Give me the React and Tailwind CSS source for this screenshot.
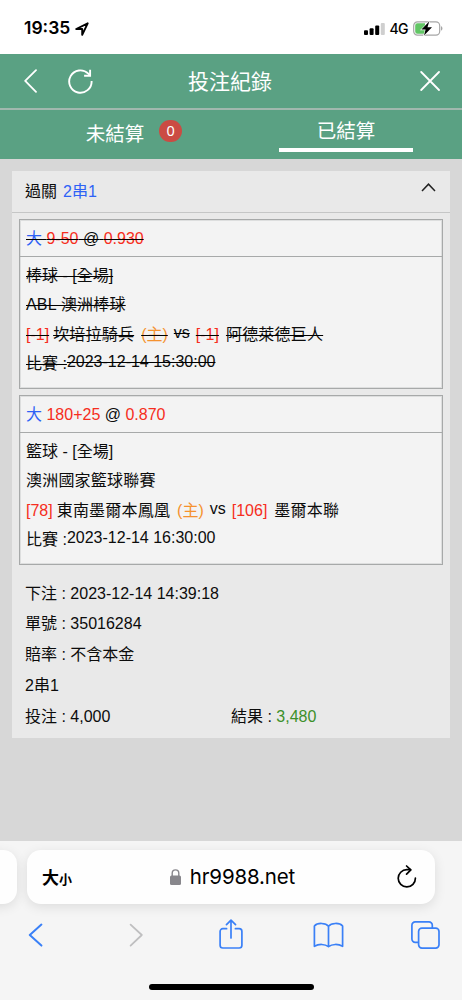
const BETS = [
  {
    pick: '9-50',
    odds: '0.930',
    sport: '棒球',
    league: 'ABL 澳洲棒球',
    home: '坎培拉騎兵',
    homeScore: '[-1]',
    away: '阿德萊德巨人',
    awayScore: '[-1]',
    date: '2023-12-14 15:30:00',
    voided: true,
  },
  {
    pick: '180+25',
    odds: '0.870',
    sport: '籃球',
    league: '澳洲國家籃球聯賽',
    home: '東南墨爾本鳳凰',
    homeScore: '[78]',
    away: '墨爾本聯',
    awayScore: '[106]',
    date: '2023-12-14 16:30:00',
    voided: false,
  },
]

const SUMMARY = [
  ['下注', '2023-12-14 14:39:18'],
  ['單號', '35016284'],
  ['賠率', '不含本金'],
]

function StatusBar() {
  return (
    <div className="flex h-[54px] items-center bg-white pl-6 pr-[19px] pt-[3px] font-['Inter',sans-serif] text-black">
      <span className="text-[17.5px] font-semibold">19:35</span>
      <svg className="ml-[5px] h-[14px] w-[14px]" viewBox="0 0 14 14" fill="none" stroke="black" strokeWidth="1.9" strokeLinejoin="round">
        <path d="M1.2 7 12.7 1.3 7.2 12.8V7Z" />
      </svg>
      <svg className="ml-auto h-[12px] w-[21px]" viewBox="0 0 21 12">
        <rect x="0" y="7.3" width="4" height="4.7" rx="1" />
        <rect x="5.6" y="5.2" width="4" height="6.8" rx="1" />
        <rect x="11.2" y="2.6" width="4" height="9.4" rx="1" />
        <rect x="16.8" y="0" width="4" height="12" rx="1" fill="#cfcfcf" />
      </svg>
      <span className="ml-[5px] text-[14px] font-medium tracking-[-0.6px]">4G</span>
      <svg className="ml-[5px] h-[15px] w-[30px]" viewBox="0 0 30 15">
        <rect x="0.7" y="0.9" width="26" height="13.2" rx="3.8" fill="white" stroke="#a6a6a6" strokeWidth="1.2" />
        <path d="M28 5.3c1.9.6 1.9 3.8 0 4.4z" fill="#a6a6a6" />
        <path d="M4.5 2.3H12v10.4H4.5a2.3 2.3 0 0 1-2.3-2.3V4.6a2.3 2.3 0 0 1 2.3-2.3Z" fill="#62c665" />
        <path d="M16.2.6 8.4 8.6h4.2L11 14.4l8-8.1h-4.5Z" stroke="white" strokeWidth="1.2" paintOrder="stroke" />
      </svg>
    </div>
  )
}

function TitleBar() {
  return (
    <header className="grid h-14 grid-cols-[1fr_auto_1fr] items-center border-b-2 border-[#a1b8ae] bg-[#5aa183] text-white">
      <div className="flex items-center pl-6">
        <svg className="h-6 w-[13px]" viewBox="0 0 13 24" fill="none" stroke="white" strokeWidth="1.8" strokeLinecap="round" strokeLinejoin="round">
          <path d="M12 1.2 1.2 11.9 12 22.8" />
        </svg>
        <svg className="ml-[31px] h-[25px] w-[25px]" viewBox="0 0 25 25" fill="none" stroke="white" strokeWidth="1.9">
          <path d="M23.6 12A11.2 11.2 0 1 1 20.3 4.6L22 6.5" />
          <path d="M22.1.8v5.9h-6" />
        </svg>
      </div>
      <h1 className="pr-0.5 pt-px text-[21px] leading-none">投注紀錄</h1>
      <svg className="mr-[22px] h-5 w-5 justify-self-end" viewBox="0 0 20 20" fill="none" stroke="white" strokeWidth="1.8" strokeLinecap="round">
        <path d="m1.2 1 17.8 18M19 1 1.2 19" />
      </svg>
    </header>
  )
}

function Tabs() {
  return (
    <nav className="grid h-[49px] grid-cols-2 bg-[#5aa183] text-[19.5px] text-white">
      <div className="flex items-start justify-center pl-[37px] pt-2">
        <span className="pt-[5px] leading-[22px]">未結算</span>
        <span className="ml-[15px] mt-[2px] flex h-[22px] w-[23px] items-center justify-center rounded-full bg-[#cb4b43] font-['Noto_Sans',sans-serif] text-[14.5px]">
          0
        </span>
      </div>
      <div className="flex flex-col items-center pr-px pt-[10px]">
        <span className="leading-[22px]">已結算</span>
        <span className="mt-[6px] h-1 w-[134px] bg-white" />
      </div>
    </nav>
  )
}

function BetCard({ bet }) {
  return (
    <section className={`h-[170px] border border-[#a7a9a9] bg-[#f3f3f3] ring-1 ring-inset ring-[#dddede] ${bet.voided ? 'line-through decoration-black decoration-[1.4px]' : ''}`}>
      <div className="h-[37px] border-b border-[#a7a9a9] pl-1.5 pt-px leading-9">
        <span className="text-[#2e62f6]">大</span> <span className="text-[#f62d20]">{bet.pick}</span> @{' '}
        <span className="text-[#f62d20]">{bet.odds}</span>
      </div>
      <div className="flex flex-col pl-1.5 pt-1 leading-[29.4px]">
        <p>{bet.sport} - [全場]</p>
        <p className="tracking-[0.2px]">{bet.league}</p>
        <p className="flex">
          <span className="text-[#f62d20]">{bet.homeScore}</span>
          <span className="ml-1 tracking-[0.2px]">{bet.home}</span>
          <span className="ml-[7px] text-[#f5922f]">(主)</span>
          <span className="-mt-0.5 ml-1.5">vs</span>
          <span className="ml-1.5 text-[#f62d20]">{bet.awayScore}</span>
          <span className="ml-[7px] tracking-[0.2px]">{bet.away}</span>
        </p>
        <p className="flex">
          <span>比賽 :</span>
          <span className="-mt-0.5">{bet.date}</span>
        </p>
      </div>
    </section>
  )
}

function BetSlip() {
  return (
    <article className="h-[567px] bg-[#e9e9e9] text-base text-[#0c0c0c]">
      <div className="flex h-[42px] items-center border-b border-[#c5c6c6] pl-[13px] pr-[14px]">
        <span>過關</span>
        <span className="ml-1.5 text-[#2e62f6]">2串1</span>
        <svg className="mb-2 ml-auto h-[9px] w-[15px]" viewBox="0 0 15 9" fill="none" stroke="#222" strokeWidth="1.5">
          <path d="M1 8 7.5 1.2 14 8" />
        </svg>
      </div>
      <div className="flex flex-col gap-1.5 px-[7px] pt-1.5">
        {BETS.map((bet) => (
          <BetCard key={bet.league} bet={bet} />
        ))}
      </div>
      <div className="pl-[13px] pt-[13.5px] leading-[30.8px]">
        {SUMMARY.map(([label, value]) => (
          <p key={label}>
            {label} : {value}
          </p>
        ))}
        <p>2串1</p>
        <div className="grid grid-cols-[206px_1fr]">
          <p>投注 : 4,000</p>
          <p>
            結果 : <span className="text-[#3c9029]">3,480</span>
          </p>
        </div>
      </div>
    </article>
  )
}

function BrowserBar() {
  return (
    <footer className="h-[159px] overflow-hidden bg-[#f5f5f5] pt-[9px]">
      <div className="flex gap-[10px]">
        <div className="-ml-5 h-[54px] w-[37px] shrink-0 rounded-[14px] bg-[#fefefe] shadow-[0_3px_12px_rgba(0,0,0,0.1)]" />
        <div className="grid h-[54px] w-[408px] shrink-0 grid-cols-[1fr_auto_1fr] items-center rounded-[14px] bg-[#fefefe] pl-[15px] pr-[18px] shadow-[0_3px_12px_rgba(0,0,0,0.1)]">
          <div className="flex items-baseline pt-0.5 font-['Noto_Sans_CJK_TC',sans-serif] font-bold text-black">
            <span className="text-[17px] leading-6">大</span>
            <span className="text-[13px] leading-6">小</span>
          </div>
          <div className="flex items-center pl-1.5">
            <svg className="h-4 w-[11px]" viewBox="0 0 11 16" fill="#88878c">
              <rect x="0" y="6.6" width="11" height="9.4" rx="1.5" />
              <path d="M2.2 7V4.2a3.3 3.3 0 0 1 6.6 0V7" fill="none" stroke="#88878c" strokeWidth="1.4" />
            </svg>
            <span className="ml-[9px] font-['Inter',sans-serif] text-[20.5px] tracking-[-0.15px] text-black">hr9988.net</span>
          </div>
          <svg className="h-[23px] w-5 -translate-y-px justify-self-end" viewBox="0 0 20 23" fill="none" stroke="black" strokeWidth="1.7" strokeLinecap="round" strokeLinejoin="round">
            <path d="M18.4 13.2a8.6 8.6 0 1 1-8.6-8.5h3.6" />
            <path d="m9.6 1 4.2 3.9-4.2 4.3" />
          </svg>
        </div>
      </div>
      <div className="mt-[15px] flex h-8 items-center pl-7 pr-[22px]">
        <svg className="h-6 w-[15px]" viewBox="0 0 15 24" fill="none" stroke="#3a80f7" strokeWidth="2" strokeLinecap="round" strokeLinejoin="round">
          <path d="M13.4 1.6 1.8 12l11.6 10.6" />
        </svg>
        <svg className="ml-[86px] h-6 w-[15px]" viewBox="0 0 15 24" fill="none" stroke="#bfbfc0" strokeWidth="1.8" strokeLinecap="round" strokeLinejoin="round">
          <path d="M1.6 1.6 12.8 12 1.6 22.6" />
        </svg>
        <svg className="ml-[75px] h-8 w-6" viewBox="0 0 24 32" fill="none" stroke="#3a80f7" strokeWidth="1.7" strokeLinecap="round" strokeLinejoin="round">
          <path d="M7.6 9.7H3.8a2.7 2.7 0 0 0-2.7 2.7v13.9a2.7 2.7 0 0 0 2.7 2.7h16.4a2.7 2.7 0 0 0 2.7-2.7V12.4a2.7 2.7 0 0 0-2.7-2.7h-3.8" />
          <path d="M12 19V1.5M7.5 5.7 12 1.2l4.5 4.5" />
        </svg>
        <svg className="ml-[70px] h-[26px] w-[31px]" viewBox="0 0 31 26" fill="none" stroke="#3a80f7" strokeWidth="1.7" strokeLinejoin="round">
          <path d="M15.5 4.2C12.8.8 4.5.4 1.4 4v20.3c4.3-2.5 10.5-2.5 14.1.4 3.6-2.9 9.8-2.9 14.1-.4V4C26.5.4 18.2.8 15.5 4.2ZM15.5 4.2v20.5" />
        </svg>
        <svg className="ml-auto h-7 w-[29px]" viewBox="0 0 29 28" fill="none" stroke="#3a80f7" strokeWidth="1.7">
          <path d="M7.5 21.3H4.2A3.3 3.3 0 0 1 .9 18V4.2A3.3 3.3 0 0 1 4.2.9H18a3.3 3.3 0 0 1 3.3 3.3v3" />
          <rect x="7.6" y="7.2" width="20.4" height="19.9" rx="3.3" />
        </svg>
      </div>
      <div className="mx-auto mt-[33px] h-1.5 w-[165px] rounded-full bg-black" />
    </footer>
  )
}

export default function App() {
  return (
    <div className="flex h-[1000px] w-[462px] flex-col overflow-hidden bg-[#d7d7d7] font-['Liberation_Sans','Noto_Sans_CJK_TC',sans-serif]">
      <StatusBar />
      <TitleBar />
      <Tabs />
      <main className="flex-1 px-3 pt-3">
        <BetSlip />
      </main>
      <BrowserBar />
    </div>
  )
}
